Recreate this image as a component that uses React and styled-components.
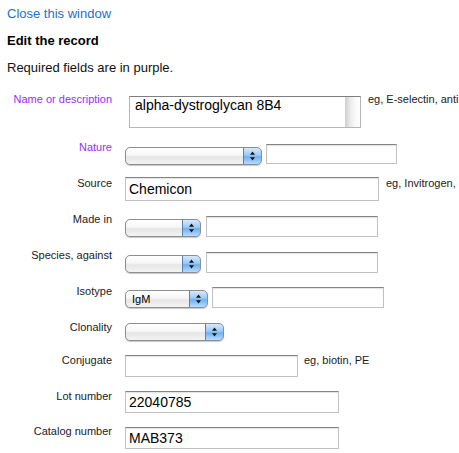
import React from "react";
import styled, { createGlobalStyle } from "styled-components";

const GlobalStyle = createGlobalStyle`
  html, body {
    margin: 0;
    padding: 0;
    background: #fff;
    overflow: hidden;
  }
  body {
    font-family: "Liberation Sans", Arial, sans-serif;
    color: #111;
  }
`;

const Page = styled.div`
  padding: 6px 0 0 7px;
`;

const CloseLink = styled.a`
  display: block;
  font-size: 13px;
  line-height: 16px;
  color: #1f6fd1;
  text-decoration: none;
`;

const Heading = styled.h3`
  margin: 11px 0 0;
  font-size: 13px;
  line-height: 16px;
  font-weight: bold;
  color: #000;
`;

const Intro = styled.p`
  margin: 11px 0 0;
  font-size: 13px;
  line-height: 16px;
  color: #111;
`;

const Form = styled.div`
  margin-top: 16px;
  margin-left: -7px;
`;

const Row = styled.div`
  display: grid;
  grid-template-columns: 112px 1fr;
  column-gap: 13px;
  height: ${(p) => p.$h || 36}px;
`;

const Label = styled.div`
  text-align: right;
  font-size: 11px;
  line-height: 14px;
  color: ${(p) => (p.$required ? "#9b2cf5" : "#222")};
  white-space: nowrap;
`;

const Fields = styled.div`
  display: flex;
  align-items: flex-start;
  white-space: nowrap;
`;

const TextBox = styled.div`
  box-sizing: border-box;
  margin-top: ${(p) => p.$top || 0}px;
  width: ${(p) => p.$w}px;
  height: ${(p) => p.$h}px;
  border: 1px solid #c2c2c2;
  border-top-color: #848484;
  box-shadow: inset 0 1px 1px rgba(0, 0, 0, 0.12);
  background: #fff;
  font-size: 14px;
  line-height: ${(p) => p.$h - 2}px;
  padding: 0 3px;
  color: #000;
  flex-shrink: 0;
`;

const TextArea = styled.div`
  box-sizing: border-box;
  position: relative;
  margin-top: 4px;
  margin-left: 4px;
  width: 232px;
  height: 32px;
  border: 1px solid #b5b5b5;
  border-top-color: #7e7e7e;
  background: #fff;
  font-size: 14px;
  line-height: 15px;
  padding: 1px 5px;
  color: #000;
  flex-shrink: 0;
`;

const ScrollTrack = styled.div`
  position: absolute;
  top: 0;
  right: 0;
  bottom: 0;
  width: 14px;
  border-left: 1px solid #d0d0d0;
  background: linear-gradient(to right, #d4d4d4, #eeeeee 35%, #fafafa 70%, #ffffff);
`;

const Select = styled.div`
  box-sizing: border-box;
  position: relative;
  margin-top: ${(p) => p.$top || 0}px;
  width: ${(p) => p.$w}px;
  height: 18px;
  border: 1px solid #8d8d8d;
  border-radius: 5px;
  background: linear-gradient(#ffffff, #f6f6f6 45%, #e6e6e6 55%, #f3f3f3);
  box-shadow: 0 1px 1px rgba(0, 0, 0, 0.22);
  font-size: 11px;
  line-height: 16px;
  padding-left: 6px;
  color: #000;
  flex-shrink: 0;
  overflow: hidden;
`;

const SelectButton = styled.div`
  position: absolute;
  top: -1px;
  right: -1px;
  bottom: -1px;
  width: 17px;
  border: 1px solid #5a7fb4;
  border-radius: 0 5px 5px 0;
  background: linear-gradient(#d5e9fc, #9ccaf6 45%, #6fafef 55%, #b8ddfd);
  display: flex;
  align-items: center;
  justify-content: center;
`;

const Hint = styled.span`
  font-size: 11px;
  line-height: 14px;
  color: #222;
  margin-left: ${(p) => p.$gap || 7}px;
  margin-top: ${(p) => p.$top || 0}px;
`;

const Spacer = styled.span`
  display: inline-block;
  width: ${(p) => p.$w}px;
  flex-shrink: 0;
`;

const Arrows = () => (
  <svg width="7" height="10" viewBox="0 0 7 10">
    <path d="M3.5 0.5 L6 3.8 L1 3.8 Z" fill="#111" />
    <path d="M3.5 9.5 L6 6.2 L1 6.2 Z" fill="#111" />
  </svg>
);

const AquaSelect = ({ w, top, value }) => (
  <Select $w={w} $top={top}>
    {value}
    <SelectButton>
      <Arrows />
    </SelectButton>
  </Select>
);

export default function App() {
  return (
    <>
      <GlobalStyle />
      <Page>
        <CloseLink href="#">Close this window</CloseLink>
        <Heading>Edit the record</Heading>
        <Intro>Required fields are in purple.</Intro>
        <Form>
          <Row $h={48}>
            <Label $required>Name or description</Label>
            <Fields>
              <TextArea>
                alpha-dystroglycan 8B4
                <ScrollTrack />
              </TextArea>
              <Hint $gap={7}>eg, E-selectin, anti</Hint>
            </Fields>
          </Row>
          <Row>
            <Label $required>Nature</Label>
            <Fields>
              <AquaSelect w={137} top={7} />
              <Spacer $w={4} />
              <TextBox $w={131} $h={20} $top={4} />
            </Fields>
          </Row>
          <Row>
            <Label>Source</Label>
            <Fields>
              <TextBox $w={254} $h={24} $top={1}>Chemicon</TextBox>
              <Hint $gap={7}>eg, Invitrogen,</Hint>
            </Fields>
          </Row>
          <Row>
            <Label>Made in</Label>
            <Fields>
              <AquaSelect w={76} top={7} />
              <Spacer $w={5} />
              <TextBox $w={172} $h={21} $top={4} />
            </Fields>
          </Row>
          <Row>
            <Label>Species, against</Label>
            <Fields>
              <AquaSelect w={76} top={7} />
              <Spacer $w={5} />
              <TextBox $w={172} $h={21} $top={4} />
            </Fields>
          </Row>
          <Row>
            <Label>Isotype</Label>
            <Fields>
              <AquaSelect w={83} top={6} value="IgM" />
              <Spacer $w={4} />
              <TextBox $w={172} $h={21} $top={3} />
            </Fields>
          </Row>
          <Row $h={33}>
            <Label>Clonality</Label>
            <Fields>
              <AquaSelect w={99} top={3} />
            </Fields>
          </Row>
          <Row>
            <Label>Conjugate</Label>
            <Fields>
              <TextBox $w={173} $h={22} $top={2} />
              <Hint $gap={6}>eg, biotin, PE</Hint>
            </Fields>
          </Row>
          <Row $h={35}>
            <Label>Lot number</Label>
            <Fields>
              <TextBox $w={214} $h={22} $top={2}>22040785</TextBox>
            </Fields>
          </Row>
          <Row>
            <Label>Catalog number</Label>
            <Fields>
              <TextBox $w={214} $h={22} $top={3}>MAB373</TextBox>
            </Fields>
          </Row>
        </Form>
      </Page>
    </>
  );
}
